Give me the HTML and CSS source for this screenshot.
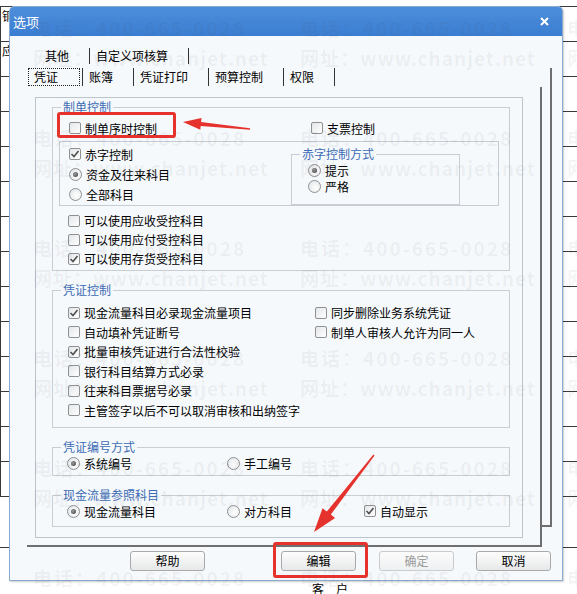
FILE: index.html
```html
<!DOCTYPE html>
<html lang="zh-CN">

<head>
    <meta charset="UTF-8">
    <meta name="viewport" content="width=device-width, initial-scale=1.0">
    <title>选项</title>
    <link rel="stylesheet" href="styles.css">
</head>

<body>
    <!-- 对话框后面的表格 -->
    <div id="sheet">
        <div class="srow"><span class="stxt">铜</span></div>
        <div class="srow"><span class="stxt">应</span></div>
        <div class="srow"></div>
        <div class="srow"></div>
        <div class="srow"></div>
        <div class="srow"></div>
        <div class="srow"></div>
        <div class="srow"></div>
        <div class="srow"></div>
        <div class="srow"></div>
        <div class="srow"></div>
        <div class="srow"></div>
        <div class="srow"></div>
        <div class="srow"></div>
        <div class="srow tall"></div>
        <div class="srow last"><span class="stxt cust">客　户</span></div>
    </div>

    <div id="dialog">
        <div class="titlebar">
            <span class="title">选项</span>
            <svg class="close" width="9" height="9" viewBox="0 0 9 9">
                <path d="M1 1L8 8M8 1L1 8" stroke="#fff" stroke-width="2" />
            </svg>
        </div>

        <ul class="tabrow r1">
            <li>其他</li>
            <li>自定义项核算</li>
        </ul>

        <div class="stack">
            <ul class="tabrow r2">
                <li class="active"><span>凭证</span></li>
                <li>账簿</li>
                <li>凭证打印</li>
                <li>预算控制</li>
                <li>权限</li>
            </ul>

            <div class="page">
                <div class="inner">
                    <!-- 制单控制 -->
                    <fieldset class="grp g1">
                        <legend>制单控制</legend>
                        <div class="line first">
                            <label class="opt w242"><i class="cb"></i>制单序时控制</label>
                            <label class="opt"><i class="cb"></i>支票控制</label>
                        </div>
                        <div class="sub">
                            <div class="subcol">
                                <label class="opt"><i class="cb on"><svg width="10" height="10" viewBox="0 0 10 10"><path d="M1.5 5L4 7.5L8.5 2" /></svg></i>赤字控制</label>
                                <label class="opt"><i class="rb on"></i>资金及往来科目</label>
                                <label class="opt"><i class="rb"></i>全部科目</label>
                            </div>
                            <fieldset class="grp g-way">
                                <legend>赤字控制方式</legend>
                                <div class="wayopts">
                                    <label class="opt"><i class="rb on"></i>提示</label>
                                    <label class="opt"><i class="rb"></i>严格</label>
                                </div>
                            </fieldset>
                        </div>
                        <div class="list">
                            <label class="opt"><i class="cb"></i>可以使用应收受控科目</label>
                            <label class="opt"><i class="cb"></i>可以使用应付受控科目</label>
                            <label class="opt"><i class="cb on"><svg width="10" height="10" viewBox="0 0 10 10"><path d="M1.5 5L4 7.5L8.5 2" /></svg></i>可以使用存货受控科目</label>
                        </div>
                    </fieldset>

                    <!-- 凭证控制 -->
                    <fieldset class="grp g2">
                        <legend>凭证控制</legend>
                        <div class="cols">
                            <div class="col left">
                                <label class="opt"><i class="cb on"><svg width="10" height="10" viewBox="0 0 10 10"><path d="M1.5 5L4 7.5L8.5 2" /></svg></i>现金流量科目必录现金流量项目</label>
                                <label class="opt"><i class="cb"></i>自动填补凭证断号</label>
                                <label class="opt"><i class="cb on"><svg width="10" height="10" viewBox="0 0 10 10"><path d="M1.5 5L4 7.5L8.5 2" /></svg></i>批量审核凭证进行合法性校验</label>
                                <label class="opt"><i class="cb"></i>银行科目结算方式必录</label>
                                <label class="opt"><i class="cb"></i>往来科目票据号必录</label>
                                <label class="opt"><i class="cb"></i>主管签字以后不可以取消审核和出纳签字</label>
                            </div>
                            <div class="col">
                                <label class="opt"><i class="cb"></i>同步删除业务系统凭证</label>
                                <label class="opt"><i class="cb"></i>制单人审核人允许为同一人</label>
                            </div>
                        </div>
                    </fieldset>

                    <!-- 凭证编号方式 -->
                    <fieldset class="grp g3">
                        <legend>凭证编号方式</legend>
                        <div class="line">
                            <label class="opt w160"><i class="rb on"></i>系统编号</label>
                            <label class="opt"><i class="rb"></i>手工编号</label>
                        </div>
                    </fieldset>

                    <!-- 现金流量参照科目 -->
                    <fieldset class="grp g4">
                        <legend>现金流量参照科目</legend>
                        <div class="line">
                            <label class="opt w160"><i class="rb on"></i>现金流量科目</label>
                            <label class="opt w137"><i class="rb"></i>对方科目</label>
                            <label class="opt"><i class="cb on"><svg width="10" height="10" viewBox="0 0 10 10"><path d="M1.5 5L4 7.5L8.5 2" /></svg></i>自动显示</label>
                        </div>
                    </fieldset>
                </div>
            </div>
        </div>

        <div class="btns">
            <button class="btn">帮助</button>
            <button class="btn b-edit">编辑</button>
            <button class="btn b-ok" disabled>确定</button>
            <button class="btn b-cancel">取消</button>
        </div>
    </div>

    <!-- 水印 -->
    <div id="wm">
        <div class="wm-cell"><p>电话：400-665-0028</p><p>网址：www.chanjet.net</p></div>
        <div class="wm-cell"><p>电话：400-665-0028</p><p>网址：www.chanjet.net</p></div>
        <div class="wm-cell"><p>电话：400-665-0028</p><p>网址：www.chanjet.net</p></div>
        <div class="wm-cell"><p>电话：400-665-0028</p><p>网址：www.chanjet.net</p></div>
        <div class="wm-cell"><p>电话：400-665-0028</p><p>网址：www.chanjet.net</p></div>
        <div class="wm-cell"><p>电话：400-665-0028</p><p>网址：www.chanjet.net</p></div>
        <div class="wm-cell"><p>电话：400-665-0028</p><p>网址：www.chanjet.net</p></div>
        <div class="wm-cell"><p>电话：400-665-0028</p><p>网址：www.chanjet.net</p></div>
        <div class="wm-cell"><p>电话：400-665-0028</p><p>网址：www.chanjet.net</p></div>
        <div class="wm-cell"><p>电话：400-665-0028</p><p>网址：www.chanjet.net</p></div>
        <div class="wm-cell"><p>电话：400-665-0028</p><p>网址：www.chanjet.net</p></div>
        <div class="wm-cell"><p>电话：400-665-0028</p><p>网址：www.chanjet.net</p></div>
        <div class="wm-cell"><p>电话：400-665-0028</p><p>网址：www.chanjet.net</p></div>
        <div class="wm-cell"><p>电话：400-665-0028</p><p>网址：www.chanjet.net</p></div>
        <div class="wm-cell"><p>电话：400-665-0028</p><p>网址：www.chanjet.net</p></div>
        <div class="wm-cell"><p>电话：400-665-0028</p><p>网址：www.chanjet.net</p></div>
        <div class="wm-cell"><p>电话：400-665-0028</p><p>网址：www.chanjet.net</p></div>
        <div class="wm-cell"><p>电话：400-665-0028</p><p>网址：www.chanjet.net</p></div>
    </div>

    <!-- 红色标注 -->
    <div class="mark m1"></div>
    <div class="mark m2"></div>
    <svg class="arrows" width="577" height="594" viewBox="0 0 577 594">
        <polygon points="183,122 201.5,117.9 201.1,121.9 250,128.3 250,129.7 200.7,125.9 200.3,129.8" />
        <polygon points="314,532 335.1,518 330.8,514.6 374.6,455.4 373.4,454.6 326.8,511.6 322.5,508.2" />
    </svg>
</body>

</html>
```

FILE: styles.css
```css
* {
    margin: 0;
    padding: 0;
    box-sizing: border-box;
}

ul {
    list-style: none;
}

body {
    position: relative;
    width: 577px;
    height: 594px;
    overflow: hidden;
    background: #ffffff;
    font-family: "Noto Sans CJK SC", "Liberation Sans", sans-serif;
    font-size: 12px;
    color: #000000;
}

/* 背景表格 */
#sheet {
    padding-top: 6px;
}

#sheet .srow {
    height: 35px;
    border-top: 1px solid #3a3a3a;
    border-left: 1px solid #3a3a3a;
}

#sheet .srow.tall {
    height: 51px;
    border-left: none;
}

#sheet .srow.last {
    height: 47px;
    border-left: none;
}

.stxt {
    display: block;
    padding: 1px 0 0 1px;
    line-height: 16px;
}

.stxt.cust {
    padding: 33px 0 0 312px;
}

/* 对话框 */
#dialog {
    position: absolute;
    left: 9px;
    top: 6px;
    width: 554px;
    border: 1px solid #8aa9cf;
    border-radius: 5px 5px 0 0;
    background: #f6f9fc;
    box-shadow: 1px 1px 2px rgba(0, 0, 0, 0.2);
    padding-bottom: 9px;
}

.titlebar {
    display: flex;
    align-items: center;
    justify-content: space-between;
    height: 29px;
    padding: 0 13px 0 3px;
    background: linear-gradient(#4d8edb, #3b7dd1);
    border-radius: 4px 4px 0 0;
}

.titlebar .title {
    color: #ffffff;
    font-size: 13px;
}

/* 页签 */
.tabrow {
    display: flex;
}

.tabrow li {
    padding: 0 20px 0 6px;
    border-right: 1px solid #333333;
    white-space: nowrap;
}

.r1 {
    margin: 12px 0 0 29px;
}

.r1 li {
    line-height: 16px;
}

.r2 {
    padding-left: 1px;
}

.r2 li {
    line-height: 18px;
}

.r2 li.active {
    padding: 0 2px 0 0;
}

.r2 li.active span {
    display: block;
    border: 1px dotted #222222;
    padding: 0 21px 0 5px;
    line-height: 16px;
}

.stack {
    margin: 4px 0 0 17px;
    width: 525px;
    border-right: 2px solid #6f6f6f;
    border-bottom: 2px solid #6f6f6f;
}

.page {
    margin: 1px 0 -22px 0;
    width: 515px;
    padding: 10px 17px 7px 8px;
    border-right: 2px solid #6f6f6f;
    border-bottom: 2px solid #6f6f6f;
    background: #f6f9fc;
}

.inner {
    width: 488px;
    border: 1px solid #bcc4cc;
    padding: 0 0 10px 16px;
}

/* 分组框 */
.grp {
    width: 458px;
    margin: 11px 0 0 0;
    padding: 0;
    border: 1px solid #c8ced4;
}

.grp legend {
    margin-left: 8px;
    padding: 0 2px;
    line-height: 16px;
    color: #3d6cb4;
}

.opt {
    display: flex;
    align-items: center;
    gap: 4px;
    height: 16px;
    white-space: nowrap;
}

.line {
    display: flex;
}

.w242 {
    width: 242px;
}

.w160 {
    width: 160px;
}

.w137 {
    width: 137px;
}

/* 复选框 / 单选框 */
.cb {
    display: flex;
    align-items: center;
    justify-content: center;
    flex: none;
    width: 12px;
    height: 12px;
    border: 1px solid #8e9092;
    border-radius: 2px;
    background: linear-gradient(135deg, #e4e6e8, #ffffff);
}

.cb svg path {
    fill: none;
    stroke: #505050;
    stroke-width: 1.6;
}

.rb {
    position: relative;
    flex: none;
    width: 13px;
    height: 13px;
    border: 1px solid #8e9092;
    border-radius: 50%;
    background: radial-gradient(circle at 60% 60%, #ffffff, #dfe1e3);
}

.rb.on::after {
    content: "";
    position: absolute;
    left: 3px;
    top: 3px;
    width: 5px;
    height: 5px;
    border-radius: 50%;
    background: radial-gradient(circle at 40% 40%, #9a9a9a, #3e3e3e);
}

/* 制单控制 */
.g1 {
    margin-top: 1px;
    padding-bottom: 2px;
}

.g1 .first {
    margin-top: 5px;
    padding-left: 16px;
}

.sub {
    display: flex;
    margin: 5px 0 0 6px;
    width: 440px;
    height: 65px;
    border: 1px solid #c5ccd3;
}

.subcol {
    width: 231px;
    padding: 2px 0 0 9px;
}

.subcol .opt {
    height: 20px;
}

.g-way {
    width: 169px;
    margin-top: 4px;
    padding-bottom: 5px;
}

.wayopts {
    padding-left: 16px;
}

.g1 .list {
    margin-top: 5px;
    padding-left: 15px;
}

.g1 .list .opt {
    height: 19px;
}

/* 凭证控制 */
.g2 {
    padding-bottom: 7px;
}

.cols {
    display: flex;
    margin-top: 5px;
}

.col.left {
    width: 262px;
    padding-left: 15px;
}

.g2 .opt {
    height: 19.5px;
}

.g3 {
    padding-bottom: 4px;
}

.g4 {
    padding-bottom: 7px;
}

.g3 .line,
.g4 .line {
    padding-left: 14px;
}

/* 按钮 */
.btns {
    display: flex;
    margin-top: 24px;
    padding-left: 120px;
}

.btn {
    width: 75px;
    height: 20px;
    border: 1px solid #a9a9a9;
    border-radius: 3px;
    background: linear-gradient(#fdfdfd, #e7e8e9);
    font-family: inherit;
    font-size: 12px;
    line-height: 18px;
    color: #000000;
}

.b-edit {
    margin-left: 76px;
}

.b-ok {
    margin-left: 23px;
    border-color: #c9cbcd;
    color: #9c9c9c;
    background: linear-gradient(#fbfbfb, #eef0f1);
}

.b-cancel {
    margin-left: 22px;
}

/* 水印 */
#wm {
    position: absolute;
    left: 0;
    top: 0;
    width: 577px;
    height: 594px;
    overflow: hidden;
    pointer-events: none;
    display: grid;
    grid-template-columns: repeat(3, 267px);
    grid-auto-rows: 110px;
    padding: 13px 0 0 33px;
    color: rgba(80, 80, 80, 0.065);
    font-size: 19px;
    font-weight: bold;
    line-height: 30px;
    letter-spacing: 1px;
    white-space: nowrap;
}

#wm .wm-cell p:first-child {
    letter-spacing: 2px;
}

/* 红色标注 */
.mark {
    position: absolute;
    border: 3px solid #e6322c;
    border-radius: 3px;
}

.m1 {
    left: 57px;
    top: 112px;
    width: 119px;
    height: 26px;
}

.m2 {
    left: 273px;
    top: 542px;
    width: 95px;
    height: 36px;
}

.arrows {
    position: absolute;
    left: 0;
    top: 0;
}

.arrows polygon {
    fill: #e6322c;
}
```
